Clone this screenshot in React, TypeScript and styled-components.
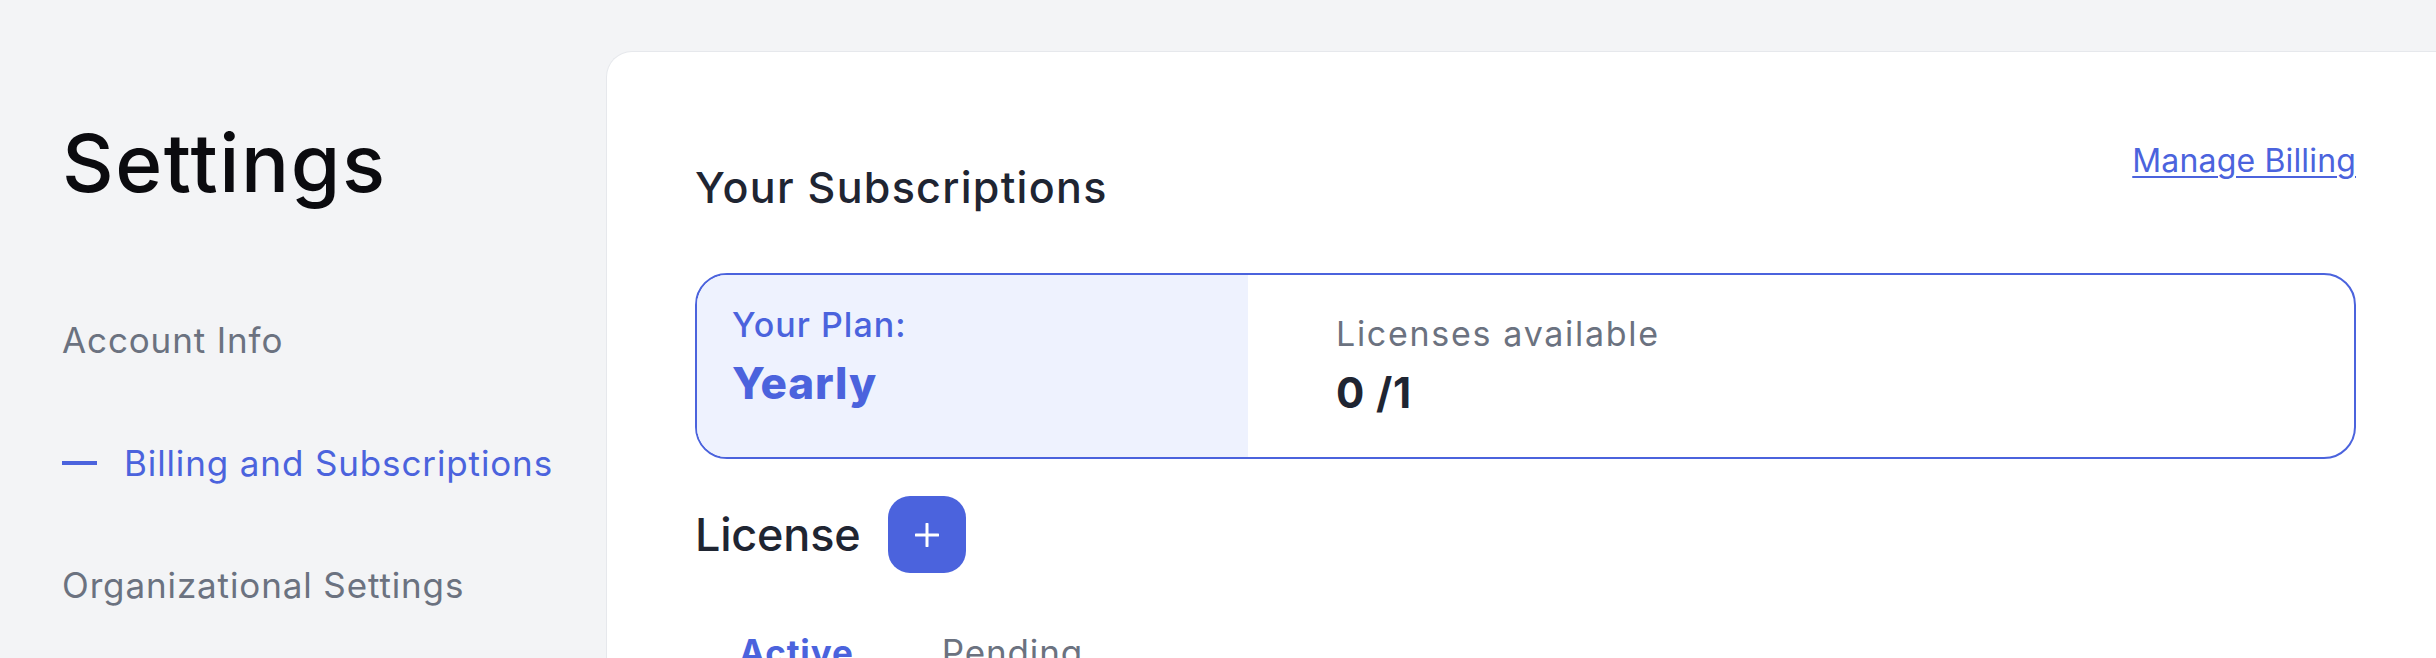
import React from "react";
import styled, { createGlobalStyle } from "styled-components";

const BLUE = "#4b63dd";
const DARK = "#1f2532";
const GRAY = "#6b7280";

const GlobalStyle = createGlobalStyle`
  html, body {
    margin: 0;
    padding: 0;
    overflow: hidden;
    background: #f3f4f6;
    font-family: Inter, "Noto Sans", "Liberation Sans", sans-serif;
  }
  * { box-sizing: border-box; }
`;

const Page = styled.div`
  display: flex;
  min-height: 100vh;
  background: #f3f4f6;
`;

const Sidebar = styled.aside`
  width: 606px;
  flex-shrink: 0;
  padding: 115px 0 0 62px;
`;

const PageTitle = styled.h1`
  margin: 0;
  font-size: 80px;
  line-height: 1.2;
  font-weight: 500;
  color: #0b0b0f;
  letter-spacing: 0.02em;
`;

const Nav = styled.nav`
  margin-top: 108px;
  display: flex;
  flex-direction: column;
  gap: 80.5px;
`;

const NavItem = styled.a<{ $active?: boolean }>`
  display: flex;
  align-items: center;
  gap: 27px;
  font-size: 35px;
  line-height: 1.2;
  font-weight: 400;
  letter-spacing: 0.025em;
  color: ${(p) => (p.$active ? BLUE : GRAY)};
  text-decoration: none;
`;

const Dash = styled.span`
  width: 35px;
  height: 4px;
  background: ${BLUE};
  display: block;
`;

const Card = styled.main`
  flex: 1;
  margin-top: 51px;
  background: #ffffff;
  border: 1px solid #e6e8ec;
  border-right: none;
  border-radius: 26px 0 0 0;
  padding: 90px 80px 0 88px;
  min-height: 800px;
`;

const CardHeader = styled.div`
  display: flex;
  justify-content: space-between;
  align-items: flex-start;
`;

const SectionTitle = styled.h2<{ $size: number; $offset?: number; $spacing?: number }>`
  margin: ${(p) => p.$offset ?? 0}px 0 0 0;
  font-size: ${(p) => p.$size}px;
  line-height: 1.2;
  font-weight: 500;
  color: ${DARK};
  letter-spacing: ${(p) => p.$spacing ?? 0}em;
`;

const ManageLink = styled.a`
  font-size: 32px;
  line-height: 1.2;
  font-weight: 400;
  color: ${BLUE};
  letter-spacing: 0.005em;
  text-decoration: underline;
  text-decoration-thickness: 2px;
  text-underline-offset: 4px;
  cursor: pointer;
`;

const PlanBox = styled.section`
  margin-top: 60px;
  height: 186px;
  display: flex;
  border: 2px solid ${BLUE};
  border-radius: 32px;
  overflow: hidden;
`;

const PlanPanel = styled.div`
  width: 551px;
  flex-shrink: 0;
  background: #eef2fe;
  padding: 30px 35px;
`;

const StatPanel = styled.div`
  flex: 1;
  padding: 39px 88px;
`;

const PlanLabel = styled.div`
  font-size: 34px;
  line-height: 1.2;
  font-weight: 500;
  color: ${BLUE};
  letter-spacing: 0.03em;
`;

const PlanValue = styled.div`
  margin-top: 11px;
  font-size: 44px;
  line-height: 1.2;
  font-weight: 800;
  color: ${BLUE};
  letter-spacing: 0.02em;
`;

const StatLabel = styled.div`
  font-size: 34px;
  line-height: 1.2;
  font-weight: 400;
  color: ${GRAY};
  letter-spacing: 0.05em;
`;

const StatValue = styled.div`
  margin-top: 13px;
  font-size: 42px;
  line-height: 1.2;
  font-weight: 700;
  color: ${DARK};
  letter-spacing: 0.02em;
`;

const LicenseRow = styled.div`
  margin-top: 37px;
  display: flex;
  align-items: center;
  gap: 28px;
`;

const AddButton = styled.button`
  width: 78px;
  height: 77px;
  border: none;
  border-radius: 22px;
  background: ${BLUE};
  display: flex;
  align-items: center;
  justify-content: center;
  padding: 0;
  cursor: pointer;
`;

const Tabs = styled.div`
  margin-top: 58px;
  display: flex;
`;

const Tab = styled.button<{ $active?: boolean }>`
  background: none;
  border: none;
  padding: 0 44px 20px;
  font-family: inherit;
  font-size: 35px;
  line-height: 1.2;
  font-weight: ${(p) => (p.$active ? 700 : 400)};
  color: ${(p) => (p.$active ? BLUE : GRAY)};
  letter-spacing: 0.025em;
  border-bottom: 3px solid ${(p) => (p.$active ? BLUE : "transparent")};
  cursor: pointer;
`;

export default function App() {
  return (
    <>
      <GlobalStyle />
      <Page>
        <Sidebar>
          <PageTitle>Settings</PageTitle>
          <Nav>
            <NavItem>Account Info</NavItem>
            <NavItem $active>
              <Dash />
              Billing and Subscriptions
            </NavItem>
            <NavItem>Organizational Settings</NavItem>
          </Nav>
        </Sidebar>
        <Card>
          <CardHeader>
            <SectionTitle $size={43} $offset={19.5} $spacing={0.03}>
              Your Subscriptions
            </SectionTitle>
            <ManageLink>Manage Billing</ManageLink>
          </CardHeader>
          <PlanBox>
            <PlanPanel>
              <PlanLabel>Your Plan:</PlanLabel>
              <PlanValue>Yearly</PlanValue>
            </PlanPanel>
            <StatPanel>
              <StatLabel>Licenses available</StatLabel>
              <StatValue>0 /1</StatValue>
            </StatPanel>
          </PlanBox>
          <LicenseRow>
            <SectionTitle $size={45} $spacing={-0.005}>
              License
            </SectionTitle>
            <AddButton aria-label="Add license">
              <svg width="24" height="24" viewBox="0 0 24 24">
                <path d="M12 1v22M1 12h22" stroke="#fff" strokeWidth="3" strokeLinecap="round" />
              </svg>
            </AddButton>
          </LicenseRow>
          <Tabs>
            <Tab $active>Active</Tab>
            <Tab>Pending</Tab>
          </Tabs>
        </Card>
      </Page>
    </>
  );
}
